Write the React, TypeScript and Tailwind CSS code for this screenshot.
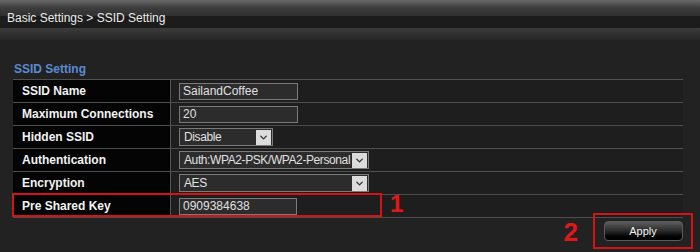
import { ChevronDown } from "lucide-react";

const rows = [
  { label: "SSID Name", kind: "input", value: "SailandCoffee", w: "w-[119px]" },
  { label: "Maximum Connections", kind: "input", value: "20", w: "w-[119px]" },
  { label: "Hidden SSID", kind: "select", value: "Disable", w: "w-[94px]" },
  { label: "Authentication", kind: "select", value: "Auth:WPA2-PSK/WPA2-Personal", w: "w-[190px]" },
  { label: "Encryption", kind: "select", value: "AES", w: "w-[190px]" },
  { label: "Pre Shared Key", kind: "input", value: "0909384638", w: "w-[118px]" },
];

function Field({ kind, value, w }: { kind: string; value: string; w: string }) {
  if (kind === "input") {
    return (
      <div className={`${w} h-[17px] border border-[#7a7a7a] bg-[#2c2c2c] px-[3px] text-[12px] leading-[15px] text-[#e0e0e0]`}>
        {value}
      </div>
    );
  }
  return (
    <div className={`${w} h-[18px] flex items-center border border-[#7a7a7a] bg-[#2c2c2c] text-[12px] text-[#e0e0e0]`}>
      <span className="flex-1 pl-[4px] whitespace-nowrap tracking-[-0.4px] leading-[16px]">{value}</span>
      <span className="w-[15px] h-[15px] mr-[1px] bg-[#dcdcdc] flex items-center justify-center">
        <ChevronDown className="w-[11px] h-[11px] text-[#333]" strokeWidth={3} />
      </span>
    </div>
  );
}

export default function App() {
  return (
    <div className="w-[700px] h-[252px] bg-[#222222] overflow-hidden font-['Liberation_Sans',Arial,sans-serif]">
      {/* breadcrumb bar */}
      <div className="h-[16px] bg-gradient-to-b from-[#6a6a6a] via-[#3c3c3c] to-[#303030]" />
      <div className="h-[12px] bg-[#1c1c1c]" />
      <div className="-mt-[20px] h-[20px] pl-[7px] flex items-center text-[12px] text-[#ececec]">
        Basic Settings &gt; SSID Setting
      </div>
      <div className="h-[12px] bg-gradient-to-b from-[#3c3c3c] to-[#262626]" />

      <div className="relative pl-[13px] pt-[22px]">
        <div className="pl-[1px] text-[12px] font-bold text-[#5b8ad2] leading-[14px] h-[16px]">SSID Setting</div>
        <div className="w-[670px] border-t border-[#505050] mt-[1px]">
          {rows.map((r, i) => (
            <div key={r.label} className="relative flex h-[23px] border-b border-[#4e4e4e]">
              <div className="w-[157px] bg-[#040404] pl-[9px] flex items-center text-[12px] font-bold text-[#f2f2f2]">
                {r.label}
              </div>
              <div className="w-px bg-[#555]" />
              <div className="flex-1 bg-[#1e1e1e] pl-[8px] flex items-center">
                <Field kind={r.kind} value={r.value} w={r.w} />
              </div>
              {i === rows.length - 1 && (
                <>
                  <div className="absolute left-[-1px] top-[-2px] w-[370px] h-[24px] border-2 border-[#d41414]" />
                  <div className="absolute left-[377px] top-[-4px] text-[24px] font-bold text-[#e01818] leading-[26px]">1</div>
                </>
              )}
            </div>
          ))}
        </div>

        {/* apply */}
        <div className="relative w-[680px] h-[36px] -mt-[5px] flex items-center justify-end">
          <span className="mr-[15px] mt-[2px] text-[26px] font-bold text-[#e01818] leading-[26px]">2</span>
          <div className="w-[100px] h-[36px] border-2 border-[#d41414] flex items-center justify-center">
            <button className="w-[79px] h-[20px] rounded-[4px] border border-[#5a5a5a] bg-gradient-to-b from-[#5e5e5e] via-[#2a2a2a] to-[#000] text-[11px] text-[#f0f0f0]">
              Apply
            </button>
          </div>
        </div>
      </div>
    </div>
  );
}
